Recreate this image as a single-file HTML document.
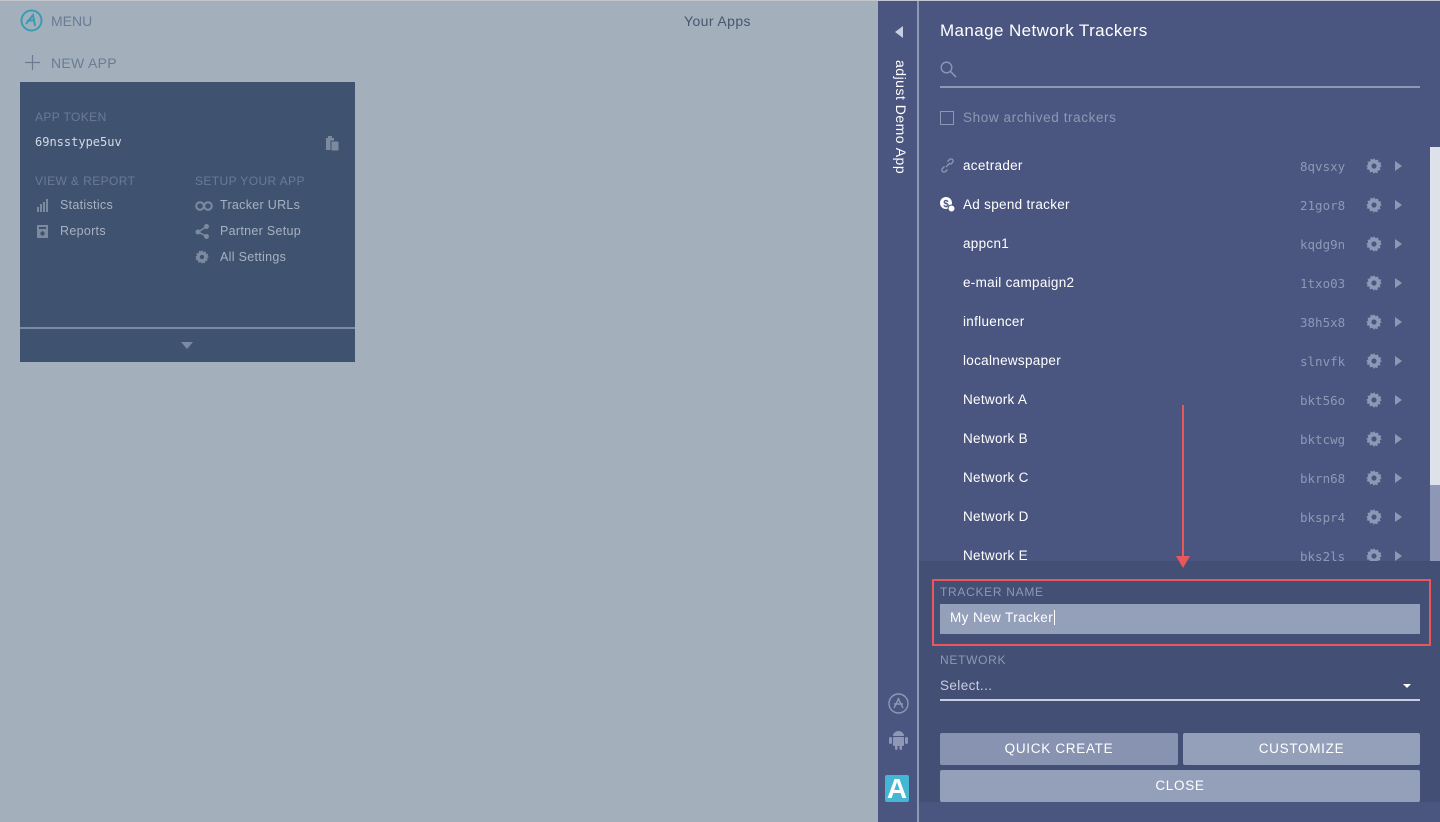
<!DOCTYPE html>
<html><head><meta charset="utf-8"><style>
*{box-sizing:border-box;margin:0;padding:0}
body{width:1440px;height:822px;overflow:hidden;background:#a3b0bc;font-family:"Liberation Sans","DejaVu Sans",sans-serif;position:relative}
.abs{position:absolute;white-space:nowrap}
.mono{font-family:"DejaVu Sans Mono","Liberation Mono",monospace}
.topline{left:0;top:0;width:1440px;height:1px;background:#c3c6cc}
.card{left:20px;top:82px;width:335px;height:280px;background:#3f5370}
.lbl{color:#6a7b93;font-size:12px;letter-spacing:.4px}
.lnk{color:#a7b1c0;font-size:12.5px;letter-spacing:.3px}
.side{left:878px;top:1px;width:41px;height:821px;background:#4b5680;border-right:2px solid #8e98b6}
.panel{left:919px;top:1px;width:521px;height:821px;background:#4b5680}
.row{left:963px;color:#fff;font-size:13.5px;letter-spacing:.3px}
.code{left:1300px;color:#8e98b6;font-size:12.5px}
.tri{left:1395px;width:0;height:0;border-top:5px solid transparent;border-bottom:5px solid transparent;border-left:7px solid #8e98b6}
.form{left:919px;top:561px;width:521px;height:241px;background:#434f74}
.btn{background:#949fba;color:#fff;font-size:13.5px;text-align:center;letter-spacing:.7px;border-radius:2px}
</style></head><body>
<div class="abs topline"></div>
<svg class="abs" style="left:20px;top:9px" width="23" height="23" viewBox="0 0 23 23"><circle cx="11.5" cy="11.5" r="10" fill="none" stroke="#3a9cb2" stroke-width="2"/><path d="M6 15 L13 6 L15 17 M7 12 L15 11" fill="none" stroke="#3a9cb2" stroke-width="2"/></svg>
<div class="abs" style="left:51px;top:13px;color:#6a7b93;font-size:14px">MENU</div>
<div class="abs" style="left:684px;top:13px;color:#45566f;font-size:14px;letter-spacing:.4px">Your Apps</div>
<svg class="abs" style="left:25px;top:55px" width="15" height="15"><path d="M7.5 0V15M0 7.5H15" stroke="#6a7b93" stroke-width="1.2"/></svg>
<div class="abs" style="left:51px;top:55px;color:#6a7b93;font-size:14px;letter-spacing:.3px">NEW APP</div>
<div class="abs card"></div>
<div class="abs lbl" style="left:35px;top:110px">APP TOKEN</div>
<div class="abs mono" style="left:35px;top:135px;color:#d4dae3;font-size:12px">69nsstype5uv</div>
<svg class="abs" style="left:326px;top:136px" width="14" height="15"><rect x="0" y="2" width="8" height="12" fill="#7c8aa0"/><rect x="5" y="5" width="8" height="10" fill="#7c8aa0" stroke="#3f5370" stroke-width="1"/><rect x="2" y="0" width="4" height="3" fill="#7c8aa0"/></svg>
<div class="abs lbl" style="left:35px;top:174px">VIEW &amp; REPORT</div>
<div class="abs lbl" style="left:195px;top:174px">SETUP YOUR APP</div>
<svg class="abs" style="left:37px;top:199px" width="12" height="13"><path d="M0 13V8h2v5zM3 13V5h2v8zM6 13V3h2v10zM9 13V0h2v13z" fill="#7c8aa0"/></svg>
<div class="abs lnk" style="left:60px;top:198px">Statistics</div>
<svg class="abs" style="left:37px;top:225px" width="11" height="13"><rect width="11" height="13" fill="#7c8aa0"/><rect x="2" y="2" width="7" height="2" fill="#3f5370"/><circle cx="5.5" cy="8.5" r="2.2" fill="#3f5370"/></svg>
<div class="abs lnk" style="left:60px;top:224px">Reports</div>
<svg class="abs" style="left:195px;top:201px" width="18" height="10"><circle cx="5" cy="5" r="3.8" fill="none" stroke="#7c8aa0" stroke-width="2"/><circle cx="13" cy="5" r="3.8" fill="none" stroke="#7c8aa0" stroke-width="2"/></svg>
<div class="abs lnk" style="left:220px;top:198px">Tracker URLs</div>
<svg class="abs" style="left:195px;top:224px" width="15" height="15"><path d="M3 8L11 3M3 8L11 12" stroke="#7c8aa0" stroke-width="1.5"/><circle cx="3" cy="8" r="2.5" fill="#7c8aa0"/><circle cx="11.5" cy="2.5" r="2.5" fill="#7c8aa0"/><circle cx="11.5" cy="12.5" r="2.5" fill="#7c8aa0"/></svg>
<div class="abs lnk" style="left:220px;top:224px">Partner Setup</div>
<svg class="abs" style="left:195px;top:250px" width="14" height="14" viewBox="0 0 16 16"><path d="M8 0l1.5 2.3 2.6-.8.4 2.7 2.7.4-.8 2.6L16 8l-2.3 1.5.8 2.6-2.7.4-.4 2.7-2.6-.8L8 16l-1.5-2.3-2.6.8-.4-2.7-2.7-.4.8-2.6L0 8l2.3-1.5-.8-2.6 2.7-.4.4-2.7 2.6.8z" fill="#7c8aa0"/><circle cx="8" cy="8" r="2.5" fill="#3f5370"/></svg>
<div class="abs lnk" style="left:220px;top:250px">All Settings</div>
<div class="abs" style="left:20px;top:327px;width:335px;height:2px;background:#7a8aa2"></div>
<div class="abs" style="left:181px;top:342px;width:0;height:0;border-left:6px solid transparent;border-right:6px solid transparent;border-top:7px solid #7a8aa2"></div>

<div class="abs side"></div>
<div class="abs" style="left:895px;top:26px;width:0;height:0;border-top:6px solid transparent;border-bottom:6px solid transparent;border-right:8px solid #c8cde0"></div>
<div class="abs" style="left:889px;top:60px;width:20px;height:130px;color:#fff;font-size:14px;letter-spacing:.5px;writing-mode:vertical-rl">adjust Demo App</div>
<svg class="abs" style="left:888px;top:693px" width="21" height="21"><circle cx="10.5" cy="10.5" r="9.5" fill="none" stroke="#8e98b6" stroke-width="1.4"/><path d="M6 15L11 5M15 15L10 5M6 11H15" stroke="#8e98b6" stroke-width="1.4"/></svg>
<svg class="abs" style="left:889px;top:729px" width="19" height="22"><path d="M4 7a5.5 5 0 0 1 11 0z" fill="#8e98b6"/><rect x="4" y="8" width="11" height="9" rx="1" fill="#8e98b6"/><rect x="0" y="8" width="3" height="7" rx="1.5" fill="#8e98b6"/><rect x="16" y="8" width="3" height="7" rx="1.5" fill="#8e98b6"/><rect x="6" y="16" width="2.5" height="5" rx="1.2" fill="#8e98b6"/><rect x="10.5" y="16" width="2.5" height="5" rx="1.2" fill="#8e98b6"/></svg>
<div class="abs" style="left:885px;top:775px;width:24px;height:27px;background:#45b6d4;border-radius:2px;color:#fff;font-size:28px;font-weight:bold;line-height:28px;text-align:center">A</div>

<div class="abs panel"></div>
<div class="abs" style="left:940px;top:21px;color:#fff;font-size:17px;letter-spacing:.4px">Manage Network Trackers</div>
<svg class="abs" style="left:940px;top:61px" width="17" height="17"><circle cx="6.5" cy="6.5" r="5.3" fill="none" stroke="#8e98b6" stroke-width="1.3"/><path d="M10.5 10.5L16 16" stroke="#8e98b6" stroke-width="1.5"/></svg>
<div class="abs" style="left:940px;top:86px;width:480px;height:2px;background:#8e98b6"></div>
<div class="abs" style="left:940px;top:111px;width:14px;height:14px;border:1px solid #8e98b6"></div>
<div class="abs" style="left:963px;top:110px;color:#8e98b6;font-size:13.5px;letter-spacing:.6px">Show archived trackers</div>
<div class="abs" style="left:1430px;top:147px;width:10px;height:338px;background:#dde1ea"></div>
<div class="abs" style="left:1430px;top:485px;width:10px;height:76px;background:#8e98b6"></div>

<svg class="abs" style="left:940px;top:158px" width="15" height="15"><path d="M6 9L10 5M4.5 8.5L2.5 10.5a2 2 0 0 0 3 3L7.5 11.5M10.5 6.5L12.5 4.5a2 2 0 0 0-3-3L7.5 3.5" fill="none" stroke="#8e98b6" stroke-width="1.3"/></svg>
<svg class="abs" style="left:940px;top:197px" width="16" height="16"><circle cx="6" cy="6" r="6" fill="#fff"/><text x="6" y="10" font-size="10" font-family="Liberation Sans" font-weight="bold" fill="#4b5680" text-anchor="middle">$</text><circle cx="11.5" cy="11.5" r="3.5" fill="#fff" stroke="#4b5680"/></svg>

<div class="abs row" style="top:158px">acetrader</div><div class="abs code mono" style="top:159px">8qvsxy</div>
<div class="abs row" style="top:197px">Ad spend tracker</div><div class="abs code mono" style="top:198px">21gor8</div>
<div class="abs row" style="top:236px">appcn1</div><div class="abs code mono" style="top:237px">kqdg9n</div>
<div class="abs row" style="top:275px">e-mail campaign2</div><div class="abs code mono" style="top:276px">1txo03</div>
<div class="abs row" style="top:314px">influencer</div><div class="abs code mono" style="top:315px">38h5x8</div>
<div class="abs row" style="top:353px">localnewspaper</div><div class="abs code mono" style="top:354px">slnvfk</div>
<div class="abs row" style="top:392px">Network A</div><div class="abs code mono" style="top:393px">bkt56o</div>
<div class="abs row" style="top:431px">Network B</div><div class="abs code mono" style="top:432px">bktcwg</div>
<div class="abs row" style="top:470px">Network C</div><div class="abs code mono" style="top:471px">bkrn68</div>
<div class="abs row" style="top:509px">Network D</div><div class="abs code mono" style="top:510px">bkspr4</div>
<div class="abs row" style="top:548px">Network E</div><div class="abs code mono" style="top:549px">bks2ls</div>
<svg class="abs" style="left:0;top:0" width="1440" height="600">
<defs><g id="g"><path d="M8 0l1.5 2.3 2.6-.8.4 2.7 2.7.4-.8 2.6L16 8l-2.3 1.5.8 2.6-2.7.4-.4 2.7-2.6-.8L8 16l-1.5-2.3-2.6.8-.4-2.7-2.7-.4.8-2.6L0 8l2.3-1.5-.8-2.6 2.7-.4.4-2.7 2.6.8z" fill="#8e98b6"/><circle cx="8" cy="8" r="2.6" fill="#4b5680"/><path d="M29 3v10l7-5z" fill="#8e98b6"/></g></defs>
<use href="#g" x="1366" y="158"/><use href="#g" x="1366" y="197"/><use href="#g" x="1366" y="236"/><use href="#g" x="1366" y="275"/><use href="#g" x="1366" y="314"/><use href="#g" x="1366" y="353"/><use href="#g" x="1366" y="392"/><use href="#g" x="1366" y="431"/><use href="#g" x="1366" y="470"/><use href="#g" x="1366" y="509"/><use href="#g" x="1366" y="548"/>
</svg>

<div class="abs form"></div>
<div class="abs" style="left:1182px;top:405px;width:2px;height:152px;background:#e8585a"></div>
<div class="abs" style="left:1176px;top:556px;width:0;height:0;border-left:7px solid transparent;border-right:7px solid transparent;border-top:12px solid #e8585a"></div>
<div class="abs" style="left:932px;top:579px;width:499px;height:67px;border:2px solid #e8585a"></div>
<div class="abs" style="left:940px;top:585px;color:#8e98b6;font-size:12px;letter-spacing:.7px">TRACKER NAME</div>
<div class="abs" style="left:940px;top:604px;width:480px;height:30px;background:#949fba"></div>
<div class="abs" style="left:950px;top:610px;color:#fff;font-size:13.5px;letter-spacing:.4px">My New Tracker<span style="border-left:1px solid #fff;margin-left:1px"></span></div>
<div class="abs" style="left:940px;top:653px;color:#8e98b6;font-size:12px;letter-spacing:.7px">NETWORK</div>
<div class="abs" style="left:940px;top:678px;color:#c8cde0;font-size:13.5px;letter-spacing:.4px">Select...</div>
<div class="abs" style="left:1403px;top:684px;width:0;height:0;border-left:4px solid transparent;border-right:4px solid transparent;border-top:4px solid #fff"></div>
<div class="abs" style="left:940px;top:699px;width:480px;height:2px;background:#c8cde0"></div>
<div class="abs btn" style="left:940px;top:733px;width:238px;height:32px;line-height:32px;background:#8893b2">QUICK CREATE</div>
<div class="abs btn" style="left:1183px;top:733px;width:237px;height:32px;line-height:32px">CUSTOMIZE</div>
<div class="abs btn" style="left:940px;top:770px;width:480px;height:32px;line-height:32px">CLOSE</div>
</body></html>
